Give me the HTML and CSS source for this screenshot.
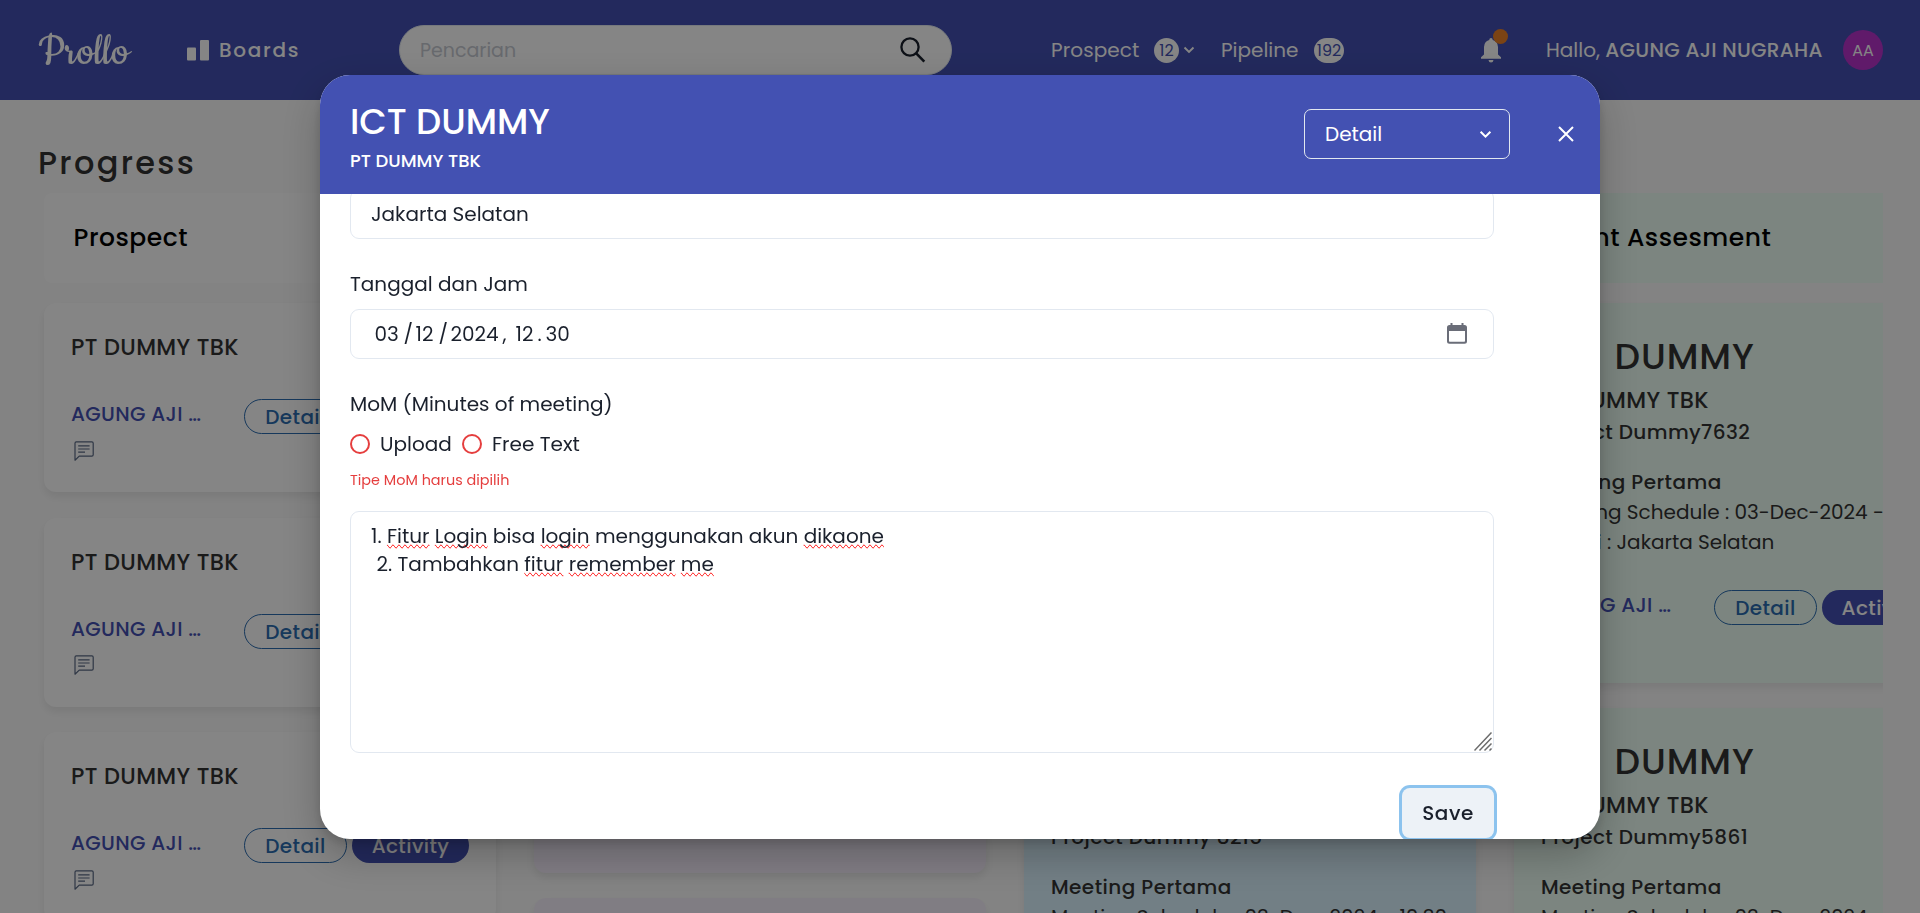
FILE: index.html
```html
<!DOCTYPE html>
<html lang="id">
<head>
<meta charset="utf-8">
<title>Prollo</title>
<link rel="stylesheet" href="styles.css">
</head>
<body>
<svg width="0" height="0" class="defs">
  <symbol id="note" viewBox="0 0 20 20"><path d="M1 19.2V2.2Q1 .9 2.3.9H17.9Q19.2.9 19.2 2.2V13.8Q19.2 15.1 17.9 15.1H5.2Z M4.2 4.9H15.6M4.2 8H15.6M4.2 11.1H11" fill="none" stroke="#5b6a85" stroke-width="1.2" stroke-linejoin="round"/></symbol>
  <symbol id="chevron" viewBox="0 0 12 8"><path d="M1.5 1.5L6 6L10.5 1.5" fill="none" stroke="#fff" stroke-width="1.9"/></symbol>
</svg>
<header class="topbar">
  <div class="logo">Prollo</div>
  <div class="boards">
    <svg width="22" height="21" viewBox="0 0 22 21"><rect x="0" y="7.5" width="9" height="13" rx="1" fill="#fff"/><rect x="13" y="0" width="9" height="20.5" rx="1" fill="#fff"/></svg>
    <span>Boards</span>
  </div>
  <div class="search">
    <span>Pencarian</span>
    <svg width="26" height="26" viewBox="0 0 26 26"><circle cx="10" cy="10" r="8.6" fill="none" stroke="#1a202c" stroke-width="2.3"/><path d="M16 16.2L24.3 24.6" stroke="#1a202c" stroke-width="2.6"/></svg>
  </div>
  <div class="nav nav-prospect"><span>Prospect</span><b class="count">12</b><svg width="12" height="8"><use href="#chevron"/></svg></div>
  <div class="nav nav-pipeline"><span>Pipeline</span><b class="count wide">192</b></div>
  <div class="bell">
    <svg width="20" height="25" viewBox="0 0 20 25"><path d="M10 0Q11.6 0 11.8 1.9Q16.8 3.2 17 9V16.5L20 19.2V20.8H0V19.2L3 16.5V9Q3.2 3.2 8.2 1.9Q8.4 0 10 0ZM7.5 22H12.5Q12.2 24.6 10 24.6Q7.8 24.6 7.5 22Z" fill="#fff"/></svg>
    <i class="dot"></i>
  </div>
  <div class="hello">Hallo, <b>AGUNG AJI NUGRAHA</b></div>
  <div class="avatar">AA</div>
</header>
<main>
  <h1>Progress</h1>
  <div class="board">
    <section class="col">
      <h2>Prospect</h2>
      <article class="card small">
        <h4>PT DUMMY TBK</h4>
        <div class="actions"><span class="agent">AGUNG AJI …</span><span class="btn outline">Detail</span><span class="btn solid">Activity</span></div>
        <svg class="note" width="20" height="20"><use href="#note"/></svg>
      </article>
      <article class="card small">
        <h4>PT DUMMY TBK</h4>
        <div class="actions"><span class="agent">AGUNG AJI …</span><span class="btn outline">Detail</span><span class="btn solid">Activity</span></div>
        <svg class="note" width="20" height="20"><use href="#note"/></svg>
      </article>
      <article class="card small">
        <h4>PT DUMMY TBK</h4>
        <div class="actions"><span class="agent">AGUNG AJI …</span><span class="btn outline">Detail</span><span class="btn solid">Activity</span></div>
        <svg class="note" width="20" height="20"><use href="#note"/></svg>
      </article>
    </section>
    <section class="col purple">
      <h2></h2>
      <article class="card tall"></article>
      <article class="card tall"></article>
    </section>
    <section class="col blue">
      <h2></h2>
      <article class="card"></article>
      <article class="card">
        <h3>ICT DUMMY</h3>
        <h4>PT DUMMY TBK</h4>
        <p class="project">Project Dummy 8215</p>
        <p class="meeting">Meeting Pertama</p>
        <p class="info">Meeting Schedule : 03-Dec-2024 - 10:30</p>
      </article>
    </section>
    <section class="col mint">
      <h2>Client Assesment</h2>
      <article class="card">
        <h3>ICT DUMMY</h3>
        <h4>PT DUMMY TBK</h4>
        <p class="project">Project Dummy7632</p>
        <p class="meeting">Meeting Pertama</p>
        <p class="info">Meeting Schedule : 03-Dec-2024 - 12:30</p>
        <p class="info">Lokasi : Jakarta Selatan</p>
        <div class="actions"><span class="agent">AGUNG AJI …</span><span class="btn outline">Detail</span><span class="btn solid">Activity</span></div>
      </article>
      <article class="card">
        <h3>ICT DUMMY</h3>
        <h4>PT DUMMY TBK</h4>
        <p class="project">Project Dummy5861</p>
        <p class="meeting">Meeting Pertama</p>
        <p class="info">Meeting Schedule : 03-Dec-2024 - 12:30</p>
      </article>
    </section>
  </div>
</main>
<div class="overlay">
  <div class="modal">
    <div class="modal-head">
      <div class="titles"><div class="title">ICT DUMMY</div><div class="subtitle">PT DUMMY TBK</div></div>
      <div class="select"><span>Detail</span><svg width="13" height="9"><use href="#chevron"/></svg></div>
      <svg class="close" width="16" height="16" viewBox="0 0 16 16"><path d="M1 1L15 15M15 1L1 15" stroke="#fff" stroke-width="2"/></svg>
    </div>
    <div class="modal-body">
      <div class="input location">Jakarta Selatan</div>
      <div class="label">Tanggal dan Jam</div>
      <div class="input date">
        <div class="parts"><span>03</span><span>/</span><span>12</span><span>/</span><span>2024</span><span>,</span><span>12</span><span>.</span><span>30</span></div>
        <svg width="20" height="21" viewBox="0 0 20 21"><path d="M3.5 0H5.5V2H14.5V0H16.5V2H17.5Q20 2 20 4.5V18.2Q20 20.7 17.5 20.7H2.5Q0 20.7 0 18.2V4.5Q0 2 2.5 2H3.5ZM2 8V18Q2 18.7 2.7 18.7H17.3Q18 18.7 18 18V8Z" fill="#6a6d78" fill-rule="evenodd"/></svg>
      </div>
      <div class="label">MoM (Minutes of meeting)</div>
      <div class="radios"><i></i><span class="up">Upload</span><i></i><span>Free Text</span></div>
      <div class="error">Tipe MoM harus dipilih</div>
      <div class="textarea">
        <div>1. <u>Fitur</u> <u>Login</u> bisa <u>login</u> menggunakan akun <u>dikaone</u></div>
        <div class="l2">2. Tambahkan <u>fitur</u> <u>remember</u> <u>me</u></div>
        <svg class="grip" width="18" height="21" viewBox="0 0 18 21"><path d="M.5 18.5L17.5 .5M5.5 18.5L17.5 6M10.5 18.5L17.5 11.5M15.5 18.5L17.5 16.5" stroke="#6b6b6b" stroke-width="1.5"/></svg>
      </div>
      <div class="footer"><span class="save">Save</span></div>
    </div>
  </div>
</div>
</body>
</html>
```

FILE: styles.css
```css
*{box-sizing:border-box}
body,h1,h2,h3,h4,p{margin:0}
h1,h2,h3,h4{font-weight:500}
body{height:913px;overflow:hidden;background:#fcfcfc;color:#333;font-family:Poppins,Inter,sans-serif;font-size:20px;white-space:nowrap}
svg{display:block;flex:none}
.defs{position:absolute}

.topbar{height:100px;padding-left:38px;background:#4350b2;color:#fff;display:grid;grid-template-columns:149px 212px 553px 99px 171px 259px 65px 297px 40px;align-items:center}
.logo{font:400 48.5px/50px Cookie,"Grand Hotel",cursive;padding-top:5px}
.boards{display:flex;align-items:center;gap:10px;font-weight:500;letter-spacing:1.7px}
.search{height:50px;border-radius:25px;border:1px solid #e2e8f0;background:#fff;display:flex;align-items:center;justify-content:space-between;padding:0 25px 0 20px;font-size:19px;color:#c6cad2}
.nav{display:flex;align-items:center}
.nav-prospect{grid-column:5;letter-spacing:.1px}
.nav span{width:103px}
.nav-pipeline{margin-left:-1px}
.nav-pipeline span{width:93px}
.count{width:25px;height:25px;border-radius:13px;background:#fff;color:#4350b2;font-weight:400;font-size:16px;line-height:26px;text-align:center;margin-right:4px;letter-spacing:0}
.wide{width:30px}
.bell{position:relative}
.dot{position:absolute;left:12px;top:-9px;width:15px;height:15px;border-radius:50%;background:#ec8127}
.hello b{font-weight:500;letter-spacing:.3px}
.avatar{height:40px;border-radius:50%;background:#b832cb;text-align:center;font-size:16px;line-height:41px}

h1{margin:33px 0 0 38px;font-size:32px;line-height:60px;letter-spacing:2.3px}
.board{height:720px;width:1845px;margin-left:38px;padding-left:6px;overflow:hidden;display:flex;gap:37.7px}
.col{flex:none;width:452.3px;--bg:#fff}
.purple{--bg:#f6effc}
.blue{--bg:#dbf3ff}
.mint{--bg:#edfff5}
h2{height:90px;margin-bottom:20px;padding-left:29.5px;border-radius:8px;background:var(--bg);color:#000;font-size:25px;line-height:90px;letter-spacing:.5px}
.card{height:380px;margin-bottom:25px;padding:31px 27px;border-radius:12px;background:var(--bg);box-shadow:0 5px 9px rgba(0,0,0,.08);letter-spacing:.4px}
.small{height:189px;margin-bottom:25.7px;padding-top:30px}
.tall{height:570px}
h3{font-size:36px;line-height:46px;letter-spacing:.9px;word-spacing:3px}
h4{font-size:22.5px;line-height:28px;letter-spacing:.35px}
h3+h4{margin-top:6px}
.project{font-weight:500;line-height:30px;margin-top:3px}
.meeting{font-weight:500;line-height:30px;margin-top:20px;letter-spacing:.45px}
.info{line-height:30px;letter-spacing:0}
.actions{display:flex;margin-top:38px;margin-bottom:6.5px;gap:5px}
.info+.actions{margin-top:33px}
.agent{flex:none;width:168px;color:#4350b2;font-weight:500;line-height:31px;letter-spacing:.33px}
.note{margin-left:3px}
.btn{flex:none;height:35px;border-radius:18px;font-weight:500;line-height:36px;text-align:center}
.outline{width:103px;border:1.5px solid #2b6cb0;color:#2b6cb0;line-height:34px}
.solid{width:117px;background:#4350b2;color:#fff}

.overlay{position:fixed;inset:0;padding-top:75px;background:rgba(0,0,0,.48)}
.modal{width:1280px;height:764px;margin:0 auto;border-radius:30px;overflow:hidden;background:#fff;color:#1a202c;display:flex;flex-direction:column;box-shadow:0 5px 10px rgba(0,0,0,.12),0 15px 40px rgba(0,0,0,.25)}
.modal-head{flex:none;height:119px;background:#4351b2;color:#fff;display:flex;align-items:flex-start;padding:24px 26.5px 0 30px}
.titles{flex:1}
.title{font-size:35.5px;font-weight:500;line-height:46px}
.subtitle{font-size:18px;font-weight:500;line-height:32px}
.select{width:206px;height:50px;margin-top:10px;border:1px solid #e2e8f0;border-radius:7px;display:flex;align-items:center;justify-content:space-between;padding:0 17px 0 20px}
.close{margin:27px 0 0 47.5px}
.modal-body{flex:1;min-height:0;overflow:hidden;padding:0 106px 0 30px;display:flex;flex-direction:column}
.input{flex:none;height:50px;border:1px solid #e2e8f0;border-radius:9px;padding:0 20px;line-height:48px}
.location{margin-top:-5px}
.label{line-height:30px;margin:30px 0 10px}
.date{display:flex;align-items:center;justify-content:space-between;padding:0 26px 2px 23.5px}
.parts{display:grid;grid-template-columns:29px 12px 23px 12px 52px 13px 22px 8px 25px;line-height:50px;padding-top:1px}
.radios{display:flex;align-items:center;height:30px}
.radios i{width:20px;height:20px;border:2px solid #e53e3e;border-radius:50%;margin-right:10px}
.up{width:82px}
.error{color:#e53e3e;font-size:14.4px;line-height:20px;margin:11px 0 21px}
.textarea{position:relative;flex:none;height:242px;border:1px solid #e2e8f0;border-radius:9px;padding:10px 20px;line-height:28px}
.textarea u{text-decoration-line:spelling-error}
.l2{padding-left:5.5px}
.grip{position:absolute;right:1px;bottom:-1px}
.footer{display:flex;justify-content:flex-end;margin-top:35px}
.save{flex:none;width:92px;height:50px;border-radius:8px;background:#edf2f7;box-shadow:0 0 0 3px #8cc3ee;line-height:50px;text-align:center;font-weight:500;letter-spacing:.5px}
```
